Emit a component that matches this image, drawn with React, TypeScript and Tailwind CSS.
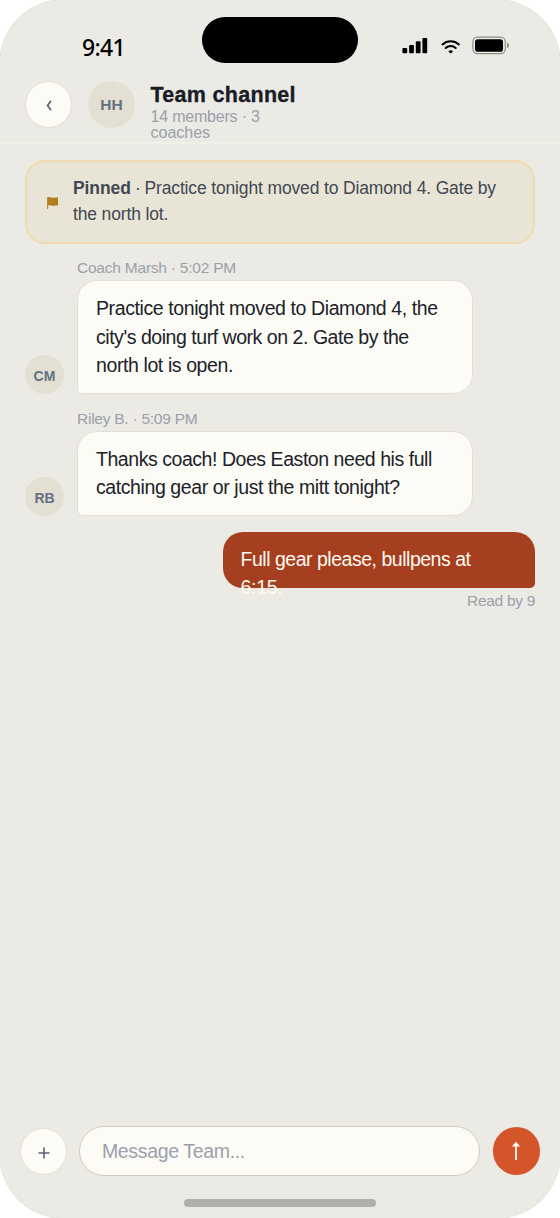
import React from "react";

interface Message {
  id: number;
  initials: string;
  meta: string;
  metaClass: string;
  lines: { text: string; className: string }[];
}

const messages: Message[] = [
  {
    id: 1,
    initials: "CM",
    meta: "Coach Marsh · 5:02 PM",
    metaClass: "tracking-[-0.22px]",
    lines: [
      {
        text: "Practice tonight moved to Diamond 4, the",
        className: "tracking-[-0.4px]",
      },
      {
        text: "city's doing turf work on 2. Gate by the",
        className: "tracking-[-0.46px]",
      },
      { text: "north lot is open.", className: "tracking-[-0.4px]" },
    ],
  },
  {
    id: 2,
    initials: "RB",
    meta: "Riley B. · 5:09 PM",
    metaClass: "tracking-[-0.25px]",
    lines: [
      {
        text: "Thanks coach! Does Easton need his full",
        className: "tracking-[-0.45px]",
      },
      {
        text: "catching gear or just the mitt tonight?",
        className: "tracking-[-0.41px]",
      },
    ],
  },
];

function StatusBar() {
  return (
    <div className="flex h-[81px] shrink-0 items-start">
      <span className="ml-[82px] mt-[31px] w-[120px] font-['Noto_Sans','Open_Sans',sans-serif] text-[23px] font-medium leading-[32px] tracking-[-0.65px] text-black">
        9:41
      </span>
      <div className="mt-[17px] h-[46px] w-[156px] rounded-full bg-black" />
      <svg
        className="ml-[44px] mt-[36px]"
        width="110"
        height="20"
        viewBox="0 0 110 20"
        fill="none"
      >
        {/* Signal */}
        <rect x="0.4" y="12" width="4.8" height="5.2" rx="1" fill="black" />
        <rect x="7.1" y="9" width="4.8" height="8.2" rx="1" fill="black" />
        <rect x="13.8" y="5.2" width="4.8" height="12" rx="1" fill="black" />
        <rect x="20.4" y="2" width="4.8" height="15.2" rx="1" fill="black" />
        {/* Wifi */}
        <path
          d="M40.5 8.4a12.4 12.4 0 0 1 16.4 0"
          stroke="black"
          strokeWidth="2"
          strokeLinecap="round"
        />
        <path
          d="M43.7 12a7.5 7.5 0 0 1 10 0"
          stroke="black"
          strokeWidth="2"
          strokeLinecap="round"
        />
        <path
          d="M46.4 15.3Q48.7 13.1 51 15.3L49.4 16.9Q48.7 17.5 48 16.9Z"
          fill="black"
        />
        {/* Battery */}
        <rect
          x="70.9"
          y="1.1"
          width="32.4"
          height="16.6"
          rx="4.6"
          stroke="black"
          strokeOpacity="0.4"
          strokeWidth="1.2"
        />
        <rect x="73" y="3.3" width="28" height="12.4" rx="2.8" fill="black" />
        <path
          d="M105 6.6c1.2.5 2 1.6 2 2.8s-.8 2.3-2 2.8Z"
          fill="black"
          fillOpacity="0.4"
        />
      </svg>
    </div>
  );
}

function ChatHeader() {
  return (
    <header className="flex h-[63px] shrink-0 items-start border-b-2 border-[#f0efe8] pl-[25px]">
      <button className="flex h-[47px] w-[47px] shrink-0 items-center justify-center rounded-full border-[1.5px] border-[#e2dfd5] bg-[#fcfbf6] pt-0.5">
        <svg width="6" height="11" viewBox="0 0 6 11" fill="none">
          <path d="M5 0.8L1.6 5.5L5 10.2" stroke="#5b6475" strokeWidth="1.7" />
        </svg>
      </button>
      <div className="ml-4 flex h-[47px] w-[47px] shrink-0 items-center justify-center rounded-full bg-[#e3dfd3] pt-px text-[15.5px] font-bold text-[#657082]">
        HH
      </div>
      <div className="ml-[15.5px] whitespace-nowrap">
        <h1 className="mt-px text-[21.5px] font-bold leading-[26px] tracking-[0.3px] text-[#191c26] [-webkit-text-stroke:0.35px_#191c26]">
          Team channel
        </h1>
        <p className="mt-px text-base leading-4 text-[#9ba0aa]">
          <span className="tracking-[-0.2px]">14 members · 3</span>
          <br />
          coaches
        </p>
      </div>
    </header>
  );
}

function PinnedBanner() {
  return (
    <div className="flex h-[84px] items-center rounded-[20px] border-2 border-[#eedbb0] bg-[#e9e5d6] pl-5">
      <svg
        className="mt-px"
        width="13"
        height="14"
        viewBox="0 0 13 14"
        fill="none"
      >
        <path d="M0.7 1V13" stroke="#b27d1d" strokeWidth="1.1" />
        <path d="M0.8 1L5.6 1.8L11 1.5V9.4L5.8 9.8L0.8 9Z" fill="#b27d1d" />
      </svg>
      <p className="-mt-0.5 ml-[13px] whitespace-nowrap text-[17.5px] leading-[26.5px] tracking-[-0.15px] text-[#414852]">
        <b className="tracking-[-0.1px]">Pinned</b>
        <span className="tracking-[-0.6px]"> · </span>
        Practice tonight moved to Diamond 4. Gate by
        <br />
        the north lot.
      </p>
    </div>
  );
}

function ReceivedMessage({ message }: { message: Message }) {
  return (
    <div className="flex items-end gap-[13px]">
      <div className="flex h-[39px] w-[39px] shrink-0 items-center justify-center rounded-full bg-[#e3dfd3] pt-[3px] text-[14px] font-bold text-[#657082]">
        {message.initials}
      </div>
      <div className="whitespace-nowrap">
        <p
          className={`mb-[3px] text-[15.5px] leading-[18px] text-[#9ba0aa] ${message.metaClass}`}
        >
          {message.meta}
        </p>
        <div className="w-[396px] rounded-[20px] rounded-bl-[5px] border-[1.5px] border-[#e2dfd5] bg-[#fcfbf6] px-[18px] pb-[13.5px] pt-[13px] text-[19.5px] leading-[28.5px] text-[#202229]">
          {message.lines.map((line) => (
            <p key={line.text} className={line.className}>
              {line.text}
            </p>
          ))}
        </div>
      </div>
    </div>
  );
}

function Composer() {
  return (
    <div className="flex h-[50px] items-center px-5">
      <button className="flex h-[47px] w-[47px] items-center justify-center rounded-full border-[1.5px] border-[#e2dfd5] bg-[#fcfbf6]">
        <svg className="ml-px mt-1" width="12" height="12" viewBox="0 0 12 12">
          <path d="M6 0.5V11.5M0.5 6H11.5" stroke="#5b6475" strokeWidth="1.6" />
        </svg>
      </button>
      <div className="ml-[12.5px] flex h-[50px] w-[401px] items-center rounded-full border-[1.5px] border-[#cfccbd] bg-[#fcfbf6] pl-[21.5px] pt-px text-[19.5px] tracking-[-0.35px] text-[#9ba0ac]">
        Message Team...
      </div>
      <button className="ml-[12.5px] flex h-[47.5px] w-[47.5px] items-center justify-center rounded-full bg-[#d4552a]">
        <svg width="10" height="20" viewBox="0 0 10 20" fill="none">
          <path d="M5 19V3" stroke="#fffaf0" strokeWidth="1.8" />
          <path d="M5 0.8L9.2 5.5H0.8Z" fill="#fffaf0" />
        </svg>
      </button>
    </div>
  );
}

export default function App() {
  return (
    <div className="h-[1218px] w-[560px] bg-white">
      <div className="flex h-full flex-col overflow-hidden rounded-[64px] bg-[#ebeae4] font-['Liberation_Sans',Arial,sans-serif] shadow-[0_0_0_1px_#e4e4e0]">
        <StatusBar />
        <ChatHeader />
        <main className="flex flex-1 flex-col px-[25px] pt-4">
          <PinnedBanner />
          <div className="mt-[15px] flex flex-col gap-[15.5px]">
            {messages.map((message) => (
              <ReceivedMessage key={message.id} message={message} />
            ))}
          </div>
          {/* Sent message, the second line runs past the bubble */}
          <div className="mt-4 flex flex-col items-end">
            <div className="h-[56px] w-[312px] whitespace-nowrap rounded-[20px] rounded-br-[5px] bg-[#a53f1f] px-[17.5px] pt-[12.5px] text-[19.5px] leading-[28.5px] text-[#fffaf0]">
              <span className="tracking-[-0.48px]">
                Full gear please, bullpens at
              </span>
              <br />
              <span className="tracking-[-0.3px]">6:15.</span>
            </div>
            <p className="mt-1 text-[15.5px] leading-[18px] tracking-[-0.3px] text-[#9ba0aa]">
              Read by 9
            </p>
          </div>
        </main>
        <Composer />
        <div className="mx-auto mb-[11px] mt-[23px] h-[8px] w-[192px] shrink-0 rounded-full bg-[#b0afa9]" />
      </div>
    </div>
  );
}
